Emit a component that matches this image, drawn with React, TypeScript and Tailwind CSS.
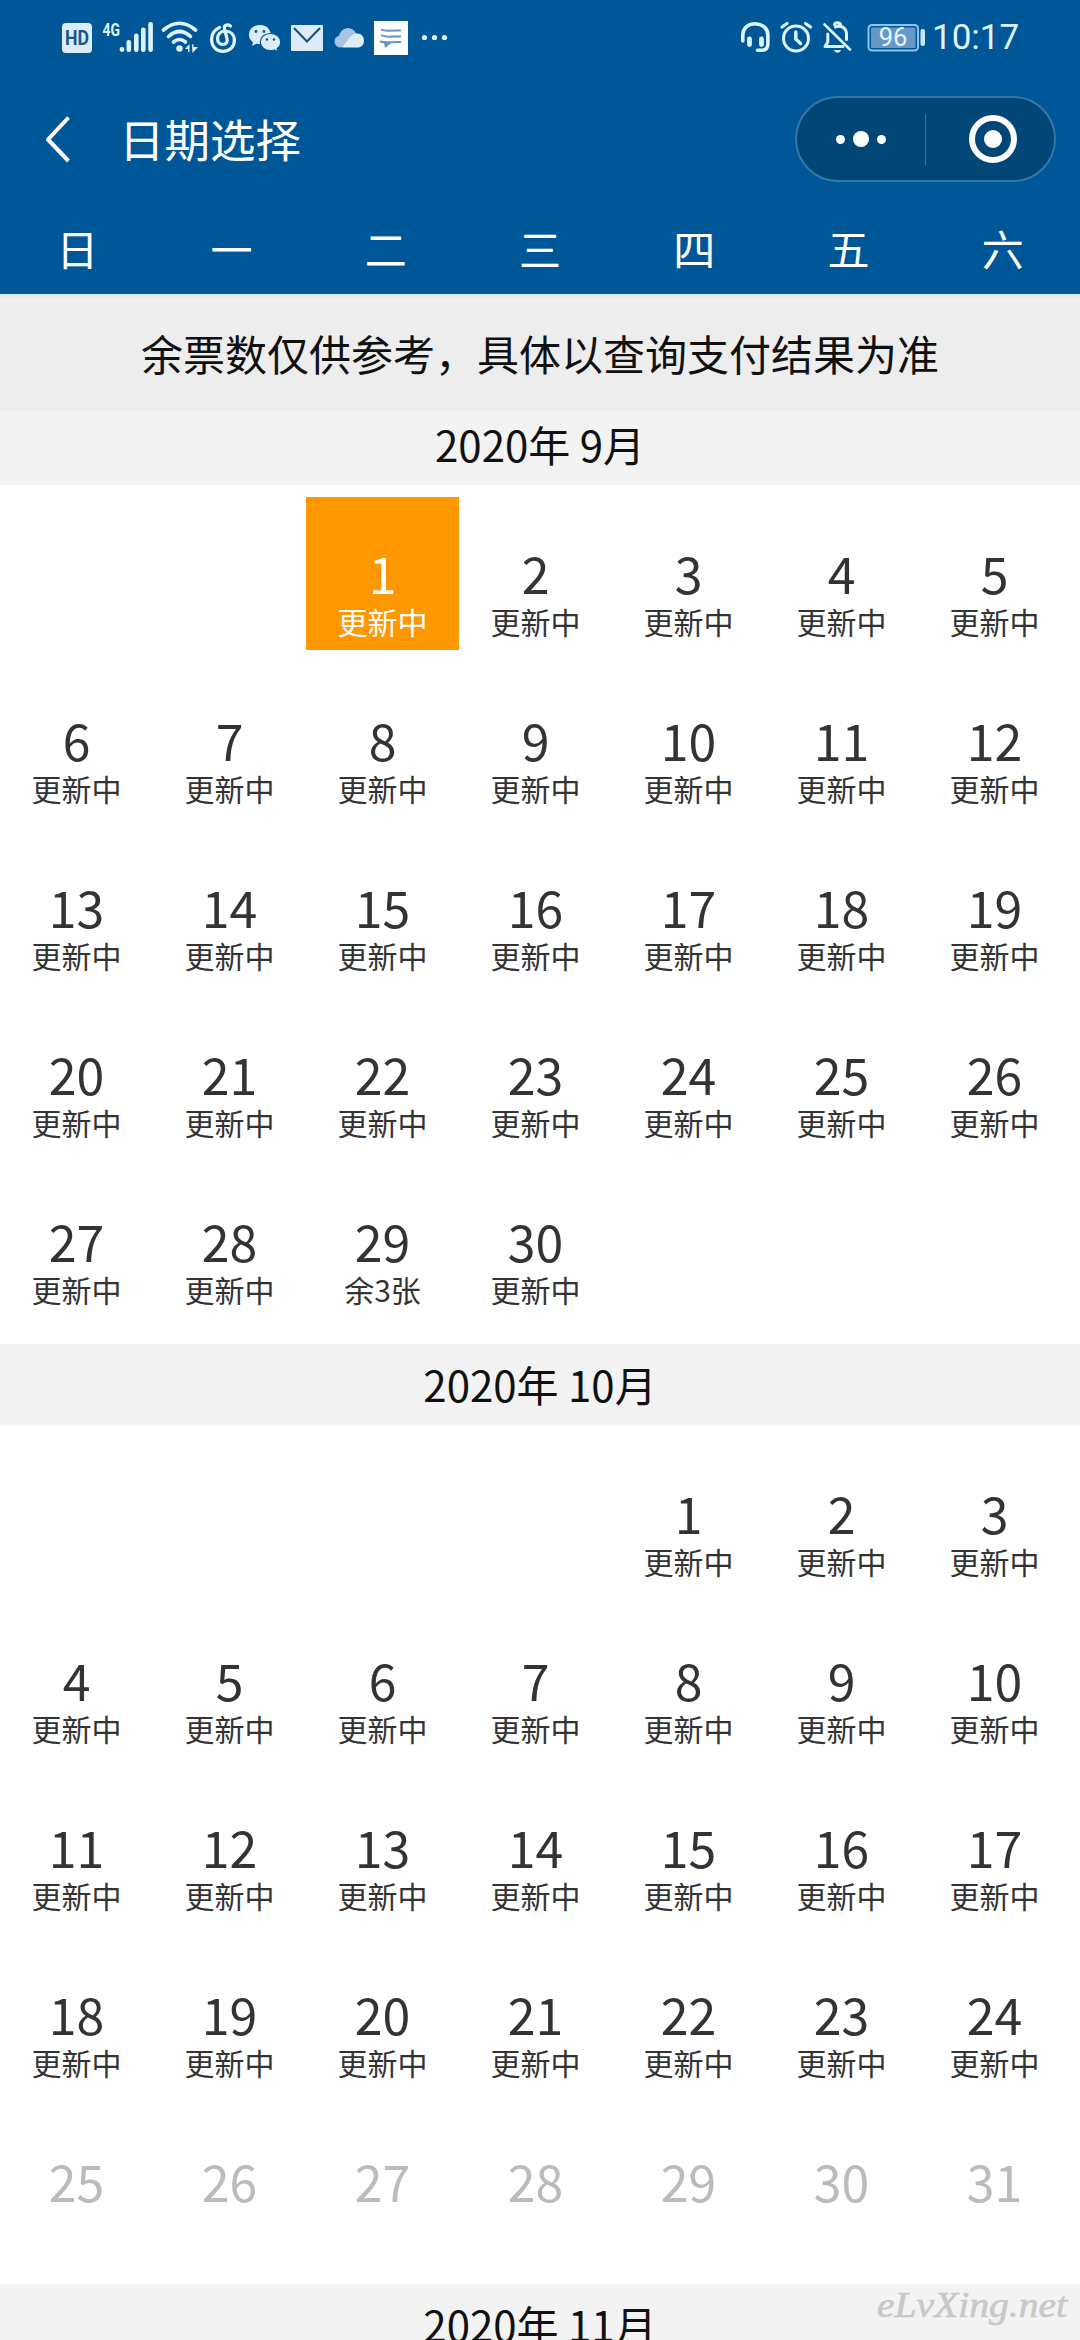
import clsx from 'clsx';

interface MonthData {
  title: string;
  offset: number;
  days: number;
  disabledFrom?: number;
  notes?: Record<number, string>;
}

const WEEKDAYS = ['日', '一', '二', '三', '四', '五', '六'];

const MONTHS: MonthData[] = [
  { title: '2020年 9月', offset: 2, days: 30, notes: { 29: '余3张' } },
  { title: '2020年 10月', offset: 4, days: 31, disabledFrom: 25 },
  { title: '2020年 11月', offset: 0, days: 0 },
];

const SELECTED = { month: 0, day: 1 };

function StatusBar() {
  return (
    <div className="flex h-[80px] items-start pt-[18px] pl-[60px] text-[#dff3ff]">
      {/* HD */}
      <svg className="h-[40px] w-[40px]" viewBox="0 0 40 40">
        <rect x="2" y="5" width="30" height="30" rx="4" fill="#dcecf8" />
        <text x="17" y="27" textAnchor="middle" fontSize="20" fontWeight="700" fontFamily="Roboto" fill="#1d5687" textLength="24" lengthAdjust="spacingAndGlyphs">HD</text>
      </svg>
      {/* 4G signal */}
      <svg className="h-[40px] w-[60px]" viewBox="0 0 60 40" fill="currentColor">
        <text x="2.5" y="17.5" fontSize="18.5" fontWeight="700" fontFamily="Roboto" textLength="17.5" lengthAdjust="spacingAndGlyphs">4G</text>
        <circle cx="22" cy="31.5" r="2.4" />
        <rect x="26.5" y="22" width="4.6" height="12" rx="2.2" />
        <rect x="34" y="15.5" width="4.6" height="18.5" rx="2.2" />
        <rect x="41" y="9.5" width="4.6" height="24.5" rx="2.2" />
        <rect x="48.3" y="4" width="4.6" height="30" rx="2.2" />
      </svg>
      {/* Wifi */}
      <svg className="h-[40px] w-[48px]" viewBox="0 0 48 40" fill="none" stroke="currentColor" strokeWidth="3.6" strokeLinecap="round">
        <path d="M3.5 12Q19.5-1.5 35.5 12" />
        <path d="M8.5 18.5Q19.5 8.5 30.5 18.5" />
        <path d="M13.5 24Q19.5 19 25.5 24" />
        <circle cx="19.5" cy="30.5" r="3.2" fill="currentColor" stroke="none" />
        <path d="M25 31L29.5 26V34H28V31ZM32 26.5L33.5 26V29L38 29L32.5 35Z" fill="currentColor" stroke="none" />
      </svg>
      {/* Music */}
      <svg className="h-[40px] w-[39px]" viewBox="0 0 39 40" fill="none" stroke="currentColor" strokeWidth="3.2" strokeLinecap="round">
        <path d="M11.5 9.5C6 12 3.6 16.5 3.6 21.5C3.6 28.5 8.5 33.3 15 33.3C22 33.3 26.4 28.5 26.4 22.5C26.4 16 22 13 17 13C12.5 13 9.5 16.5 9.5 20.5C9.5 24.5 12 26.5 14.8 26.5C18.5 26.5 19.8 23.5 19 20.5L16.5 11C15.6 7.5 19 5.5 22.5 8" />
      </svg>
      {/* Chat */}
      <svg className="h-[40px] w-[43px]" viewBox="0 0 43 40" fill="#dcecf8">
        <path d="M13 7C6.7 7 2 11.2 2 16.7C2 19.8 3.5 22.5 6 24.2L5 28L9.3 25.7C10.5 26 11.7 26.2 13 26.2C19.2 26.2 23.7 22 23.7 16.7C23.7 11.2 19.2 7 13 7Z" />
        <path d="M23.5 15.5C17.5 15.5 13.3 19.3 13.3 24C13.3 29 17.7 32.6 23.5 32.6C24.8 32.6 26.2 32.4 27.3 32L31.2 34L30.2 30.5C32.5 29 33.7 26.7 33.7 24C33.7 19.3 29.5 15.5 23.5 15.5Z" stroke="#005798" strokeWidth="1.2" />
        <g fill="#005798">
          <circle cx="9" cy="13.5" r="1.4" />
          <circle cx="17" cy="13.5" r="1.4" />
          <circle cx="20" cy="21.5" r="1.2" />
          <circle cx="27" cy="21.5" r="1.2" />
        </g>
      </svg>
      {/* Mail */}
      <svg className="h-[40px] w-[43px]" viewBox="0 0 43 40">
        <rect x="1" y="7" width="32" height="26" rx="1" fill="#dcecf8" />
        <path d="M4 10L17 23.5L30 10" fill="none" stroke="#154f80" strokeWidth="2" />
      </svg>
      {/* Cloud */}
      <svg className="h-[40px] w-[41px]" viewBox="0 0 41 40">
        <circle cx="7.5" cy="23.5" r="6" fill="#a6c4df" />
        <circle cx="15" cy="19" r="9" fill="#a6c4df" />
        <path d="M9 29.5L15 22C18 17 21 15.5 24.5 15.5C28.5 15.5 31 19 31 22.5C31 27 28 29.5 24.5 29.5Z" fill="#dcecf8" />
      </svg>
      {/* Note */}
      <svg className="h-[40px] w-[47px]" viewBox="0 0 47 40" fill="none" stroke="#6c93bd" strokeWidth="2">
        <rect y="3" width="34" height="34" fill="#fff" stroke="none" />
        <path d="M7 11.5C11 14 15 12 27 12.5M7 17C12 20 17 18 27 18.5M6 23.5C12 25.5 18 23.5 27 24" />
        <path d="M10 24.5L18 24.5L11 30Z" fill="#6c93bd" stroke="none" />
      </svg>
      <svg className="h-[40px] w-[30px]" viewBox="0 0 30 40" fill="currentColor">
        <circle cx="3.5" cy="19.5" r="2.6" />
        <circle cx="13.5" cy="19.5" r="2.6" />
        <circle cx="23.5" cy="19.5" r="2.6" />
      </svg>

      {/* Headset */}
      <svg className="ml-[288px] h-[40px] w-[40px]" viewBox="0 0 40 40" fill="none" stroke="currentColor" strokeWidth="3.6" strokeLinecap="round">
        <path d="M3.8 23V17C3.8 10.5 8.5 5.8 16 5.8C23.5 5.8 28.9 10.5 28.9 17V26C28.9 30.5 26 32.3 22 32.3H18.5" />
        <path d="M10.5 21V26.5M22.5 21V26.5" strokeWidth="4.8" />
      </svg>
      {/* Alarm */}
      <svg className="h-[40px] w-[42px]" viewBox="0 0 42 40" fill="none" stroke="currentColor" strokeWidth="3" strokeLinecap="round" strokeLinejoin="round">
        <circle cx="17" cy="20.5" r="12.5" />
        <path d="M3 9L8 5.5M31.5 9L26.5 5.5" strokeWidth="3.2" />
        <path d="M16.8 14V21L21.5 25.5" strokeWidth="3.4" />
      </svg>
      {/* Muted bell */}
      <svg className="h-[40px] w-[45px]" viewBox="0 0 45 40" fill="none" stroke="currentColor" strokeWidth="3" strokeLinecap="round" strokeLinejoin="round">
        <path d="M6.8 16V24L4 28.5H22M14.5 9C19 6.8 25.5 9 25.5 16.5V21.5" />
        <path d="M13.5 6.5C14.2 4.2 18.8 4.2 19.5 6.5" />
        <path d="M3.5 6.5L29 31.5" strokeWidth="2.6" />
        <path d="M13 32H20C19 35.5 14 35.5 13 32Z" fill="currentColor" stroke="none" />
      </svg>
      {/* Battery */}
      <svg className="h-[40px] w-[67px]" viewBox="0 0 67 40">
        <rect x="2.5" y="7" width="49.5" height="25.5" rx="3.5" fill="none" stroke="#8cc4ee" strokeWidth="2" />
        <rect x="5" y="9.5" width="44.5" height="20.5" rx="1" fill="#6797c4" />
        <rect x="54.5" y="11" width="4.5" height="17" rx="2" fill="#c5e5fb" />
        <text x="27" y="28" textAnchor="middle" fontSize="25.5" fontFamily="Roboto" fill="#e6f5ff">96</text>
      </svg>
      <span className="-ml-[1px] h-[40px] font-[Roboto] text-[35px] leading-[40px]">10:17</span>
    </div>
  );
}

function NavBar() {
  return (
    <div className="flex h-[118px] items-center pr-[24px] pl-[44px]">
      <svg className="h-[48px] w-[28px]" viewBox="0 0 28 48" fill="none" stroke="currentColor" strokeWidth="4" strokeLinejoin="round">
        <path d="M24.5 2.5L4 24.5L24.5 46" />
      </svg>
      <h1 className="-mt-[2px] ml-[47px] text-[45.5px] leading-[60px]">日期选择</h1>
      <div className="ml-auto flex h-[86px] w-[261px] items-center rounded-full border-2 border-[#3377a9] bg-[#004677]">
        <div className="flex w-[128px] shrink-0 items-center justify-center gap-[8px]">
          <i className="h-[9px] w-[9px] rounded-full bg-white" />
          <i className="h-[16px] w-[16px] rounded-full bg-white" />
          <i className="h-[9px] w-[9px] rounded-full bg-white" />
        </div>
        <div className="h-[51px] w-px bg-[#3377a9]" />
        <div className="flex flex-1 items-center justify-center pl-[6px]">
          <div className="flex h-[48px] w-[48px] items-center justify-center rounded-full border-[6px] border-white">
            <i className="h-[18px] w-[18px] rounded-full bg-white" />
          </div>
        </div>
      </div>
    </div>
  );
}

interface DayCellProps {
  day: number;
  note?: string;
  selected: boolean;
  disabled: boolean;
}

function DayCell({ day, note, selected, disabled }: DayCellProps) {
  return (
    <div
      className={clsx(
        'mb-[14px] flex h-[153px] flex-col items-center pt-[47px]',
        selected ? 'bg-[#ff9800] text-white' : disabled ? 'text-[#bbbbbb]' : 'text-[#333333]'
      )}
    >
      <span className="text-[50px] leading-[56px]">{day}</span>
      {!disabled && <span className="text-[30px] leading-[42px]">{note || '更新中'}</span>}
    </div>
  );
}

function Month({ data, index }: { data: MonthData; index: number }) {
  const blanks = Array.from({ length: data.offset });
  const days = Array.from({ length: data.days }, (_, i) => i + 1);

  return (
    <section>
      <h2 className="h-[81px] bg-[#f3f3f3] text-center text-[42px] leading-[79px] text-[#111111]">{data.title}</h2>
      <div className="grid w-[1071px] grid-cols-7 py-[12px]">
        {blanks.map((_, i) => (
          <div key={`blank-${i}`} />
        ))}
        {days.map((day) => (
          <DayCell
            key={day}
            day={day}
            note={data.notes?.[day]}
            selected={SELECTED.month === index && SELECTED.day === day}
            disabled={data.disabledFrom !== undefined && day >= data.disabledFrom}
          />
        ))}
      </div>
    </section>
  );
}

export default function App() {
  return (
    <div className="relative h-[2340px] w-[1080px] overflow-hidden bg-white font-['Noto_Sans_CJK_SC',sans-serif]">
      <header className="bg-[#005798] text-white">
        <StatusBar />
        <NavBar />
        <div className="grid h-[96px] grid-cols-7 pt-[4px] text-center text-[42px] leading-[91px]">
          {WEEKDAYS.map((name) => (
            <span key={name}>{name}</span>
          ))}
        </div>
      </header>
      <div className="relative z-10 h-[117px] border-t-[3px] border-[#e3e9f0] bg-[#ededed] text-center text-[42px] leading-[111px] text-[#111111]">
        余票数仅供参考，具体以查询支付结果为准
      </div>
      {/* the first title slides under the notice */}
      <div className="-mt-[7px]">
        {MONTHS.map((month, index) => (
          <Month key={month.title} data={month} index={index} />
        ))}
      </div>
      <svg className="absolute right-[4px] bottom-[4px] h-[54px] w-[202px]" viewBox="0 0 202 54">
        <text x="3" y="35" fontFamily="Liberation Serif" fontStyle="italic" fontSize="35" fill="#c8c8c8" stroke="#c8c8c8" strokeWidth="0.6" textLength="190" lengthAdjust="spacingAndGlyphs">eLvXing.net</text>
      </svg>
    </div>
  );
}
